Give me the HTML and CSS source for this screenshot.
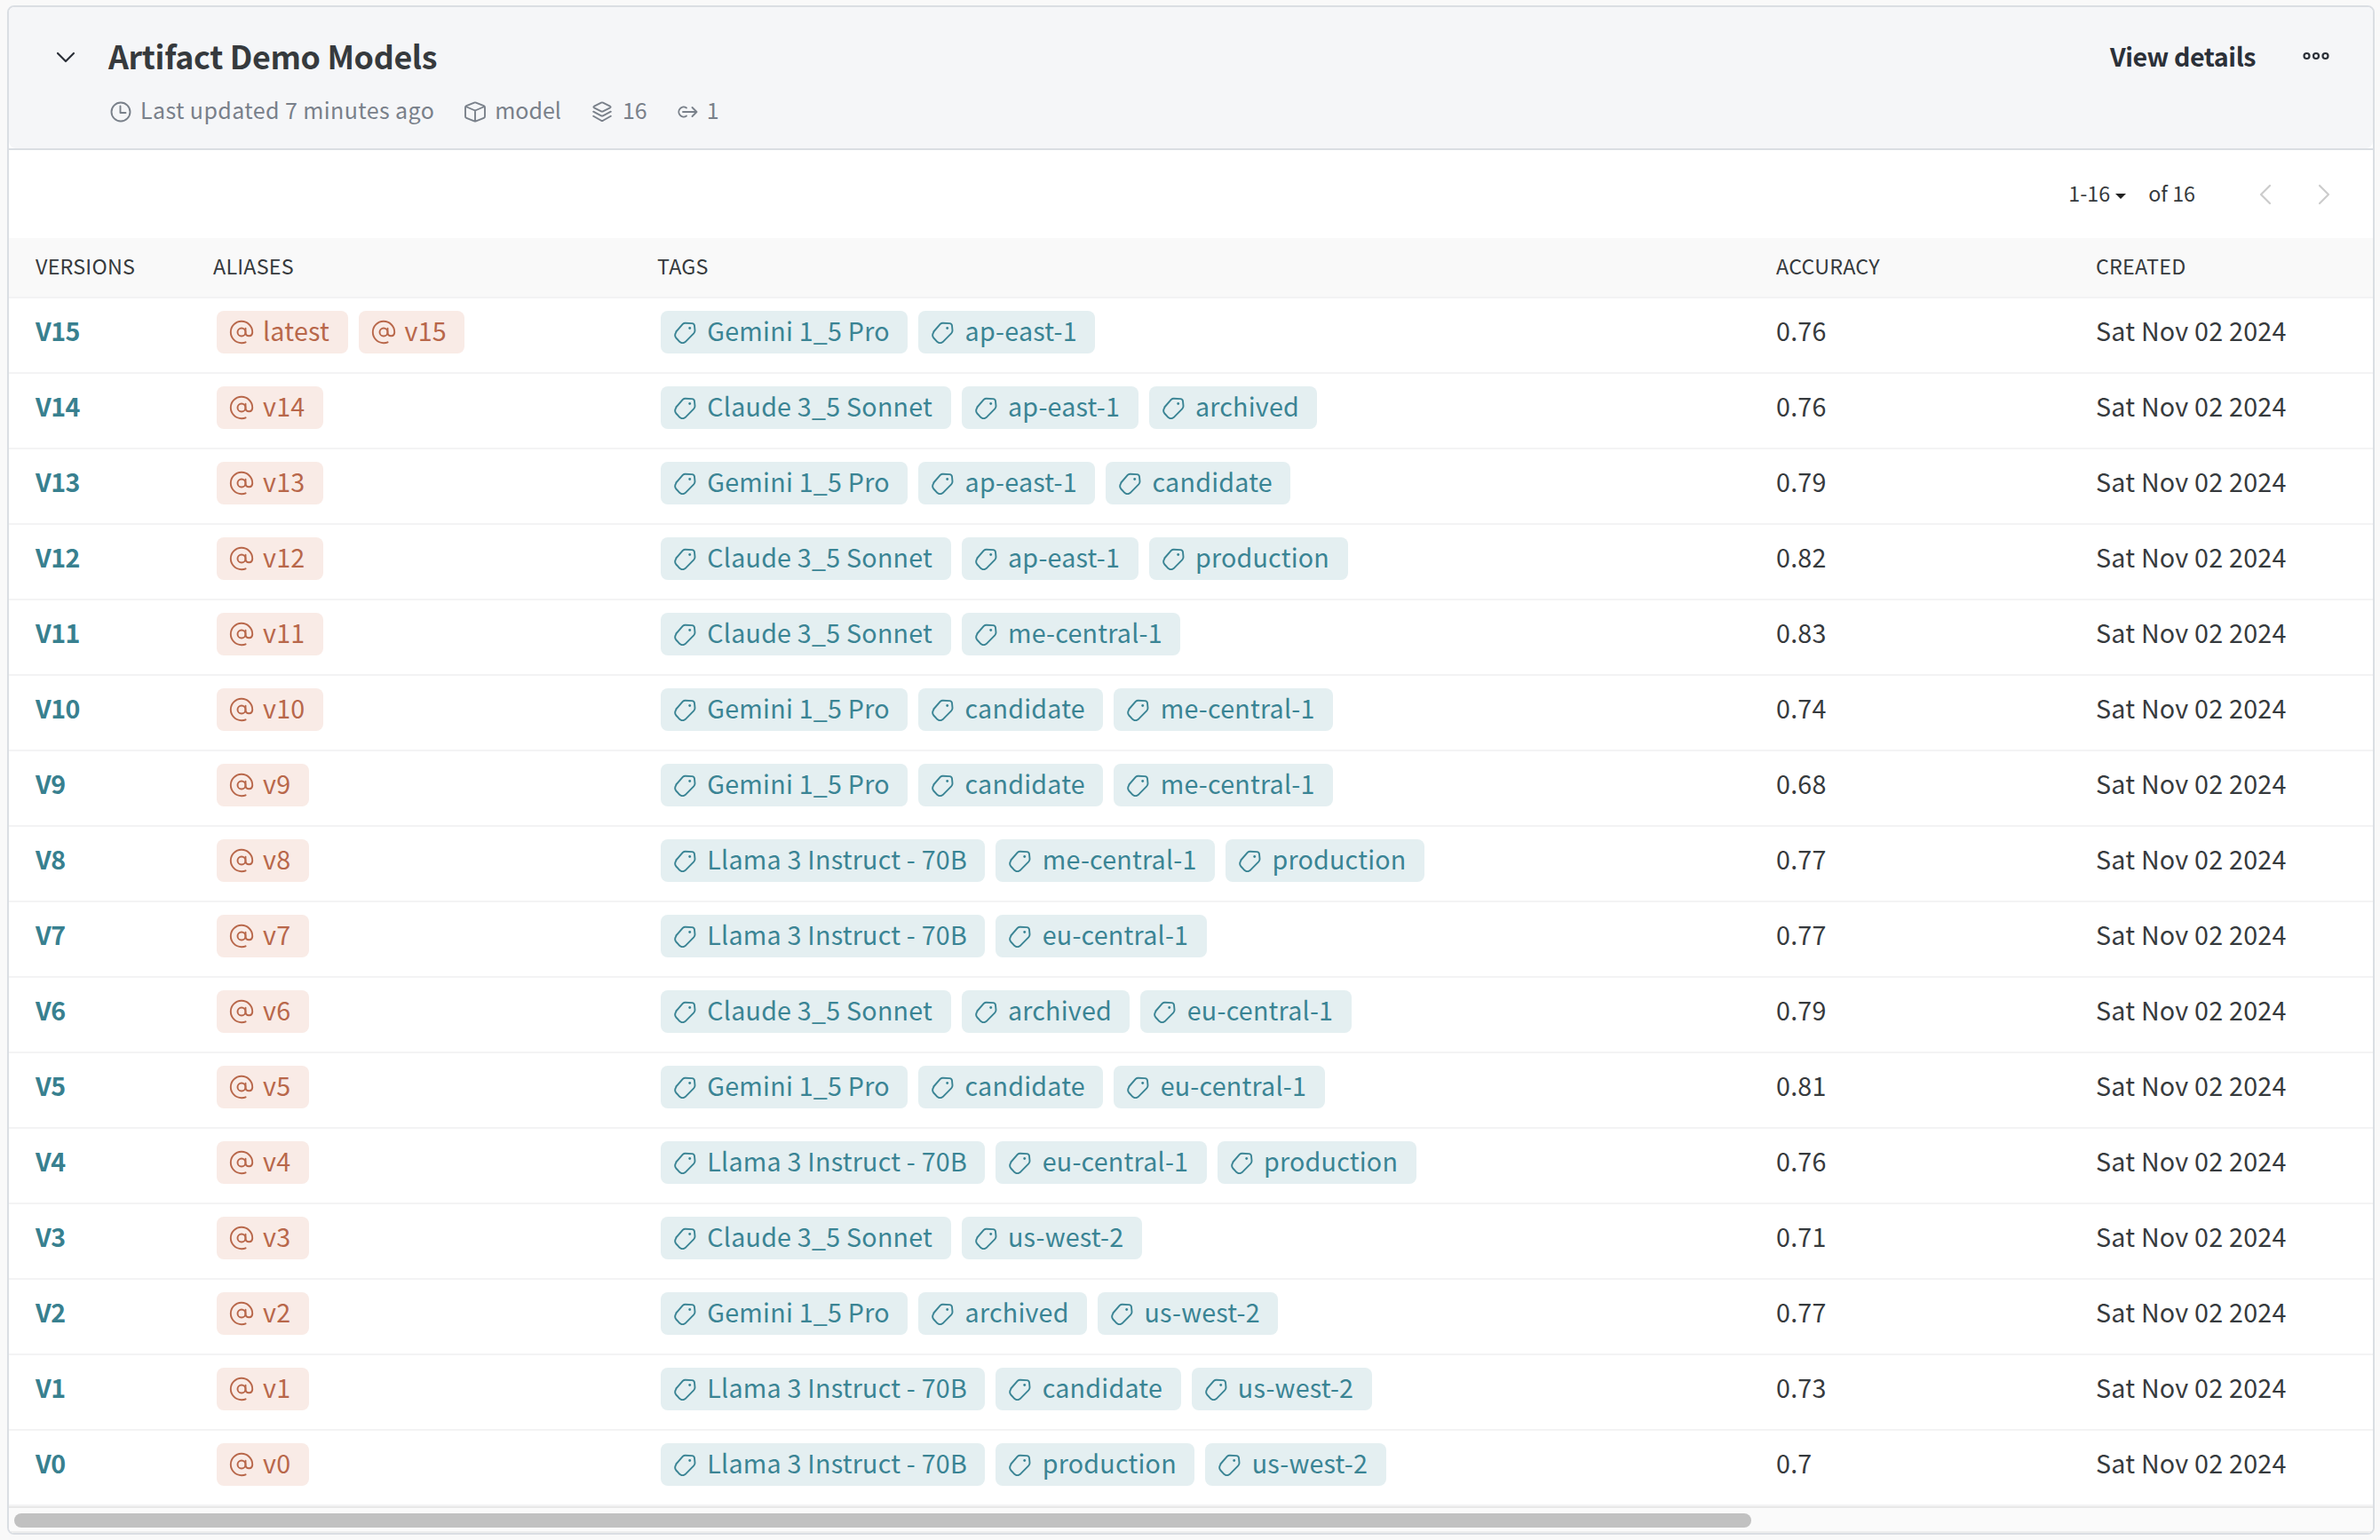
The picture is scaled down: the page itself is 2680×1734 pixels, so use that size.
FILE: index.html
```html
<!DOCTYPE html>
<html lang="en">
<head>
  <meta charset="UTF-8">
  <meta name="viewport" content="width=device-width, initial-scale=1.0">
  <title>Artifact Demo Models</title>
  <link rel="stylesheet" href="styles.css">
</head>
<body>
  <!-- icon sprites -->
  <svg class="sprites" width="0" height="0">
    <symbol id="i-at" viewBox="0 0 28 28">
      <circle cx="14" cy="14" r="4.5" />
      <path d="M18.5 9.800v5.400a3.900 3.900 0 0 0 7.700-.6v-.8a12.200 12.200 0 1 0-12.200 12.400c1.800 0 3.400-.3 4.600-.9" />
    </symbol>
    <symbol id="i-tag" viewBox="-1 -1.7 26 26">
      <path d="M10 2Q11.200.9 12.800 1L20.300 1.400Q22.700 1.600 23 3.900L23.500 9.300Q23.600 11.200 22.200 12.700L12.600 22.400Q9.500 24.600 6.600 22.400L2.300 17.800Q0 14.700 2.300 11.600L2.300 10.800Z" />
      <circle class="dot" cx="17.700" cy="6.800" r="1.400" />
    </symbol>
  </svg>

  <div class="card">
    <div class="card-header">
      <svg class="chevron" viewBox="0 0 22 14"><path d="M2 2l9 9 9-9" /></svg>
      <div class="heading">
        <h1>Artifact Demo Models</h1>
        <div class="meta">
          <span class="meta-item updated">
            <svg viewBox="0 0 24 24"><circle cx="12" cy="12" r="10.5" /><path d="M11.5 5.500v7.500h6" /></svg>
            Last updated 7 minutes ago
          </span>
          <span class="meta-item type">
            <svg viewBox="0 0 24 24"><path d="M11 1.6 2.200 5.200Q1 5.700 1 7v10q0 1.300 1.200 1.800L11 22.400q1 .4 2 0l8.800-3.600Q23 18.300 23 17V7q0-1.300-1.200-1.800L13 1.600q-1-.4-2 0zM1.500 6 12 10.500 22.500 6M12 10.500v12" /></svg>
            model
          </span>
          <span class="meta-item count">
            <svg viewBox="0 0 22 24"><path d="M10 1.6 2 5.700q-1.300.8 0 1.600l8 4.100q1 .5 2 0l8-4.100q1.300-.8 0-1.600l-8-4.100q-1-.5-2 0zM1.200 11.700 10 16.300q1 .5 2 0l8.800-4.600M1.200 16.700 10 21.800q1 .5 2 0l8.800-5.100" /></svg>
            16
          </span>
          <span class="meta-item links">
            <svg viewBox="0 0 24 24"><path d="M11 7.500A5.500 5.500 0 1 0 11 16.500M7 12h15.500M17.500 7l5 5-5 5" /></svg>
            1
          </span>
        </div>
      </div>
      <div class="actions">
        <a class="view-details">View details</a>
        <svg class="dots" viewBox="0 0 30 10"><circle cx="4.5" cy="5" r="3" /><circle cx="15" cy="5" r="3" /><circle cx="25.5" cy="5" r="3" /></svg>
      </div>
    </div>

    <div class="pager">
      <span class="range">1-16</span>
      <span class="caret"></span>
      <span class="total">of 16</span>
      <svg class="prev" viewBox="0 0 14 24"><path d="M12 2 2 12l10 10" /></svg>
      <svg class="next" viewBox="0 0 14 24"><path d="m2 2 10 10L2 22" /></svg>
    </div>

    <div class="row row-head">
      <div>VERSIONS</div>
      <div>ALIASES</div>
      <div>TAGS</div>
      <div>ACCURACY</div>
      <div>CREATED</div>
    </div>
    <div id="rows"></div>

    <div class="scrollbar"><div class="thumb"></div></div>
  </div>

  <script>
    const G = "Gemini 1_5 Pro";
    const C = "Claude 3_5 Sonnet";
    const L = "Llama 3 Instruct - 70B";

    // newest first, version number counts down from 15
    const versions = [
      { tags: [G, "ap-east-1"], acc: "0.76" },
      { tags: [C, "ap-east-1", "archived"], acc: "0.76" },
      { tags: [G, "ap-east-1", "candidate"], acc: "0.79" },
      { tags: [C, "ap-east-1", "production"], acc: "0.82" },
      { tags: [C, "me-central-1"], acc: "0.83" },
      { tags: [G, "candidate", "me-central-1"], acc: "0.74" },
      { tags: [G, "candidate", "me-central-1"], acc: "0.68" },
      { tags: [L, "me-central-1", "production"], acc: "0.77" },
      { tags: [L, "eu-central-1"], acc: "0.77" },
      { tags: [C, "archived", "eu-central-1"], acc: "0.79" },
      { tags: [G, "candidate", "eu-central-1"], acc: "0.81" },
      { tags: [L, "eu-central-1", "production"], acc: "0.76" },
      { tags: [C, "us-west-2"], acc: "0.71" },
      { tags: [G, "archived", "us-west-2"], acc: "0.77" },
      { tags: [L, "candidate", "us-west-2"], acc: "0.73" },
      { tags: [L, "production", "us-west-2"], acc: "0.7" }
    ];

    function chip(type, icon, text) {
      return `<span class="chip ${type}"><svg><use href="#${icon}" /></svg><span>${text}</span></span>`;
    }

    document.getElementById("rows").innerHTML = versions.map((v, i) => {
      const n = 15 - i;
      const aliases = i === 0 ? ["latest", "v" + n] : ["v" + n];
      return `<div class="row">
        <div class="version">V${n}</div>
        <div class="chips">${aliases.map(a => chip("alias", "i-at", a)).join("")}</div>
        <div class="chips">${v.tags.map(t => chip("tag", "i-tag", t)).join("")}</div>
        <div>${v.acc}</div>
        <div>Sat Nov 02 2024</div>
      </div>`;
    }).join("");
  </script>
</body>
</html>
```
FILE: styles.css
```css
* {
  box-sizing: border-box;
}
body {
  margin: 0;
  padding: 6px 6px 6px 8px;
  background: #f9f9f9;
  color: #363a3d;
  font-family: "Noto Sans CJK SC", "Noto Sans", sans-serif;
  font-size: 28.65px;
}
svg {
  display: block;
  fill: none;
  stroke: currentColor;
  stroke-width: 1.9;
  stroke-linecap: round;
  stroke-linejoin: round;
}
.sprites {
  position: absolute;
}
.card {
  height: 1722px;
  background: #fff;
  border: 2px solid #dadee3;
  border-radius: 8px;
  overflow: hidden;
}
.card-header {
  display: flex;
  height: 159px;
  background: #f5f6f8;
  border-radius: 0 0 8px 8px;
  padding: 31px 49px 0 53px;
}
.chevron {
  width: 22px;
  height: 14px;
  margin-top: 19px;
  color: #2b3038;
  stroke-width: 2.2;
}
.heading {
  margin-left: 37px;
}
h1 {
  margin: 0;
  font-size: 35.8px;
  font-weight: 600;
  line-height: 46px;
  letter-spacing: -0.34px;
}
.meta {
  display: flex;
  margin-top: 21px;
  color: #79808a;
  font-size: 25px;
  line-height: 34px;
}
.meta-item {
  display: flex;
  align-items: center;
  white-space: nowrap;
}
.updated {
  letter-spacing: 0.4px;
}
.meta-item svg {
  width: 24px;
  height: 24px;
  margin: 6px 10px 0 2px;
}
.type svg {
  margin-left: 34px;
}
.count svg {
  width: 22px;
  margin-left: 35px;
  margin-right: 12px;
}
.links svg {
  margin-left: 33px;
}
.actions {
  display: flex;
  align-items: center;
  height: 48px;
  margin-left: auto;
}
.view-details {
  margin-top: -1px;
  color: #2b3038;
  font-weight: 600;
  letter-spacing: -0.42px;
}
.dots {
  width: 30px;
  height: 10px;
  margin-left: 53px;
  color: #2b3038;
  stroke-width: 2.2;
}
.pager {
  display: flex;
  align-items: center;
  justify-content: flex-end;
  height: 101px;
  padding-right: 48px;
  border-top: 2px solid #dadee3;
  font-size: 23.3px;
}
.range,
.total {
  margin-top: -3px;
}
.caret {
  margin: 5px 25px 0 6px;
  border: 6px solid transparent;
  border-top-color: #222;
  border-bottom: 0;
}
.pager svg {
  width: 14px;
  height: 24px;
  color: #ccc;
  stroke-width: 2.2;
}
.prev {
  margin-left: 72px;
}
.next {
  margin-left: 52px;
}
.row {
  display: grid;
  grid-template-columns: 200px 500px 1260px 360px 1fr;
  height: 85px;
  padding: 14px 0 0 30px;
  border-bottom: 2px solid #f3f3f4;
  line-height: 43px;
  letter-spacing: 0.23px;
}
.row-head {
  height: 68px;
  padding-top: 9px;
  background: #f9f9f9;
  font-size: 23.3px;
  line-height: 45px;
}
.version {
  color: #38808f;
  font-weight: 600;
  letter-spacing: -0.6px;
}
.chips {
  display: flex;
  gap: 12px;
  padding-left: 4px;
}
.chip {
  display: flex;
  height: 48px;
  padding: 0 20.5px 0 14px;
  border-radius: 8px;
  white-space: nowrap;
}
.chip svg {
  width: 28px;
  height: 28px;
  margin: 10px 10px 0 0;
}
.alias {
  color: #b8674a;
  background: #f9ebe6;
}
.tag {
  color: #3a8494;
  background: #e4eff1;
}
.tag svg {
  width: 26px;
  height: 26px;
  margin: 11px 12.3px 0 0;
}
.dot {
  fill: currentColor;
  stroke: none;
}
.scrollbar {
  height: 30px;
  padding: 6px;
  background: #fafafa;
  border-top: 2px solid #e8e8e8;
  border-bottom: 2px solid #ededed;
}
.thumb {
  width: 1956px;
  height: 16px;
  border-radius: 8px;
  background: #c1c1c1;
}
```
